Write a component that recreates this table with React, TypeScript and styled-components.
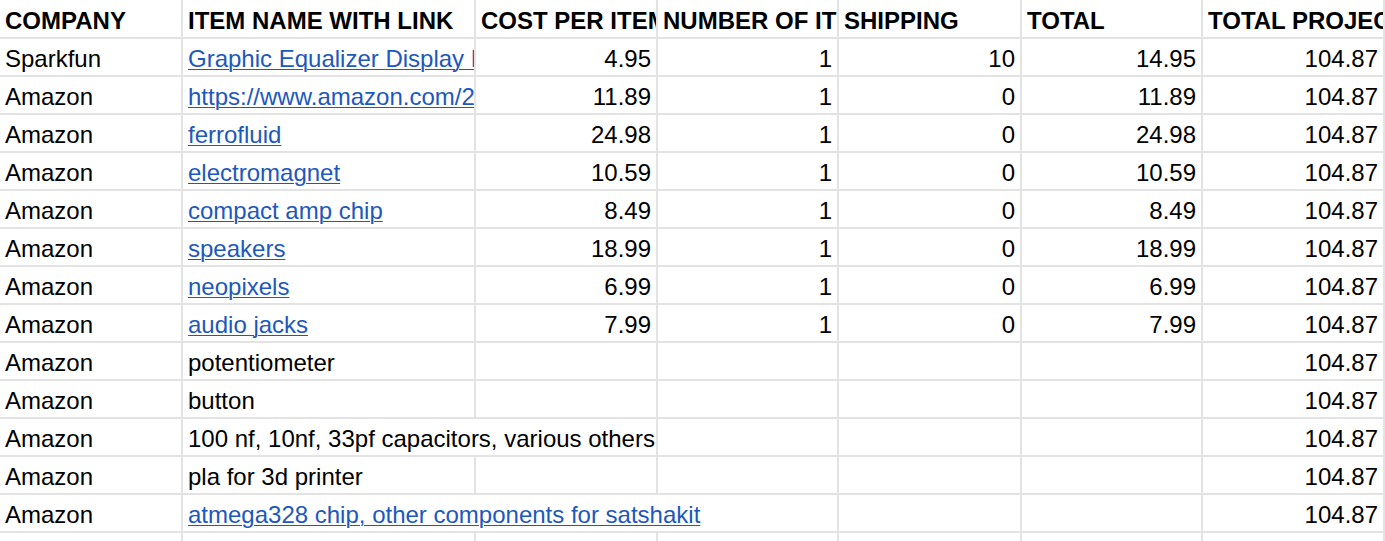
import React from "react";
import styled, { createGlobalStyle } from "styled-components";

const Global = createGlobalStyle`
  html, body { margin: 0; padding: 0; background: #fff; overflow: hidden; }
  body { font-family: "Liberation Sans", Arial, sans-serif; }
`;

const Sheet = styled.div`
  display: grid;
  grid-template-columns: 183px 293px 182px 181px 183px 181px 182px;
  grid-template-rows: 39px;
  grid-auto-rows: 38px;
  width: 1385px;
  height: 541px;
  overflow: hidden;
  background: #fff;
  font-family: "Liberation Sans", Arial, sans-serif;
  font-size: 24px;
  color: #000;
`;

const Cell = styled.div<{ $align?: "left" | "right"; $span?: number; $head?: boolean }>`
  box-sizing: border-box;
  border-right: 2px solid #e3e3e3;
  border-bottom: 2px solid #e3e3e3;
  padding: 4px 5px 0 5px;
  display: flex;
  align-items: center;
  justify-content: ${(p) => (p.$align === "right" ? "flex-end" : "flex-start")};
  white-space: nowrap;
  overflow: hidden;
  line-height: 26px;
  font-weight: ${(p) => (p.$head ? 700 : 400)};
  grid-column: ${(p) => (p.$span ? `span ${p.$span}` : "auto")};
`;

const Link = styled.a`
  color: #1d58bd;
  text-decoration: underline;
  text-underline-offset: 2px;
  text-decoration-thickness: 1px;
`;

type Row = {
  company: string;
  item: string;
  link?: boolean;
  span?: number;
  cost?: string;
  num?: string;
  ship?: string;
  total?: string;
  proj: string;
};

const rows: Row[] = [
  { company: "Sparkfun", item: "Graphic Equalizer Display Kit - Bicolor", link: true, cost: "4.95", num: "1", ship: "10", total: "14.95", proj: "104.87" },
  { company: "Amazon", item: "https://www.amazon.com/2-Pack-Speaker", link: true, cost: "11.89", num: "1", ship: "0", total: "11.89", proj: "104.87" },
  { company: "Amazon", item: "ferrofluid", link: true, cost: "24.98", num: "1", ship: "0", total: "24.98", proj: "104.87" },
  { company: "Amazon", item: "electromagnet", link: true, cost: "10.59", num: "1", ship: "0", total: "10.59", proj: "104.87" },
  { company: "Amazon", item: "compact amp chip", link: true, cost: "8.49", num: "1", ship: "0", total: "8.49", proj: "104.87" },
  { company: "Amazon", item: "speakers", link: true, cost: "18.99", num: "1", ship: "0", total: "18.99", proj: "104.87" },
  { company: "Amazon", item: "neopixels", link: true, cost: "6.99", num: "1", ship: "0", total: "6.99", proj: "104.87" },
  { company: "Amazon", item: "audio jacks", link: true, cost: "7.99", num: "1", ship: "0", total: "7.99", proj: "104.87" },
  { company: "Amazon", item: "potentiometer", proj: "104.87" },
  { company: "Amazon", item: "button", proj: "104.87" },
  { company: "Amazon", item: "100 nf, 10nf, 33pf capacitors, various others", span: 2, proj: "104.87" },
  { company: "Amazon", item: "pla for 3d printer", proj: "104.87" },
  { company: "Amazon", item: "atmega328 chip, other components for satshakit", link: true, span: 3, proj: "104.87" },
];

const headers = [
  "COMPANY",
  "ITEM NAME WITH LINK",
  "COST PER ITEM",
  "NUMBER OF ITEMS",
  "SHIPPING",
  "TOTAL",
  "TOTAL PROJECT COST",
];

export default function App() {
  return (
    <>
      <Global />
      <Sheet>
        {headers.map((h) => (
          <Cell key={h} $head>
            {h}
          </Cell>
        ))}
        {rows.map((r, i) => {
          const span = r.span ?? 1;
          const mid = [r.cost, r.num, r.ship].slice(span - 1);
          return (
            <React.Fragment key={i}>
              <Cell>{r.company}</Cell>
              <Cell $span={span > 1 ? span : undefined}>
                {r.link ? <Link href="#">{r.item}</Link> : r.item}
              </Cell>
              {mid.map((v, j) => (
                <Cell key={j} $align="right">
                  {v ?? ""}
                </Cell>
              ))}
              <Cell $align="right">{r.total ?? ""}</Cell>
              <Cell $align="right">{r.proj}</Cell>
            </React.Fragment>
          );
        })}
        {Array.from({ length: 7 }).map((_, i) => (
          <Cell key={`e${i}`} />
        ))}
      </Sheet>
    </>
  );
}
